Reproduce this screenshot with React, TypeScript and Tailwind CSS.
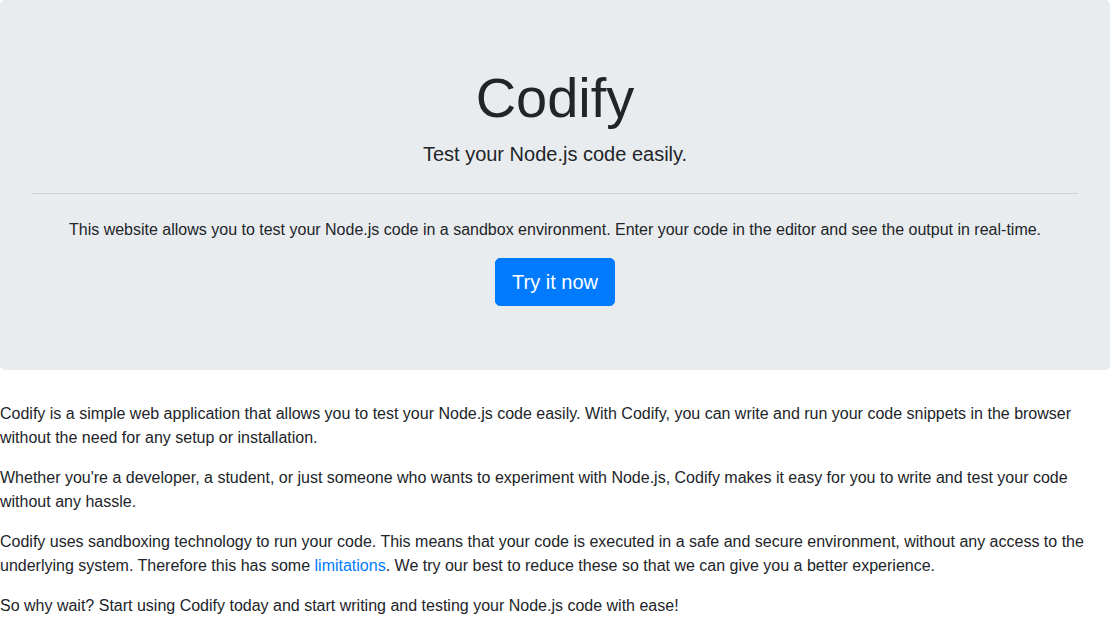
import React from 'react';

function Hero() {
  return (
    <div className="bg-[#e9ecef] rounded-[5px] px-8 py-16 mb-8 text-center">
      <h1 className="text-[56px] leading-[1.2] font-light mb-2">Codify</h1>
      <p className="text-[20px] leading-[1.5] font-light">Test your Node.js code easily.</p>
      <hr className="my-6 border-0 border-t border-black/10" />
      <p className="mb-4">
        This website allows you to test your Node.js code in a sandbox environment. Enter your code in the editor and see the output in real-time.
      </p>
      <a
        href="#"
        className="inline-block bg-[#007bff] border border-[#007bff] text-white text-[20px] leading-[1.5] px-4 py-2 rounded-[5px]"
      >
        Try it now
      </a>
    </div>
  );
}

export default function App() {
  return (
    <div
      className="min-h-screen bg-white text-[#212529] text-base leading-6"
      style={{ fontFamily: '"Liberation Sans", Arial, sans-serif' }}
    >
      <Hero />

      {/* About */}
      <div>
        <p className="mb-4">
          Codify is a simple web application that allows you to test your Node.js code easily. With Codify, you can write and run your code snippets in the browser without the need for any setup or installation.
        </p>
        <p className="mb-4">
          Whether you're a developer, a student, or just someone who wants to experiment with Node.js, Codify makes it easy for you to write and test your code without any hassle.
        </p>
        <p className="mb-4">
          Codify uses sandboxing technology to run your code. This means that your code is executed in a safe and secure environment, without any access to the underlying system. Therefore this has some{' '}
          <a href="#" className="text-[#007bff]">limitations</a>. We try our best to reduce these so that we can give you a better experience.
        </p>
        <p className="mb-4">
          So why wait? Start using Codify today and start writing and testing your Node.js code with ease!
        </p>
      </div>
    </div>
  );
}
